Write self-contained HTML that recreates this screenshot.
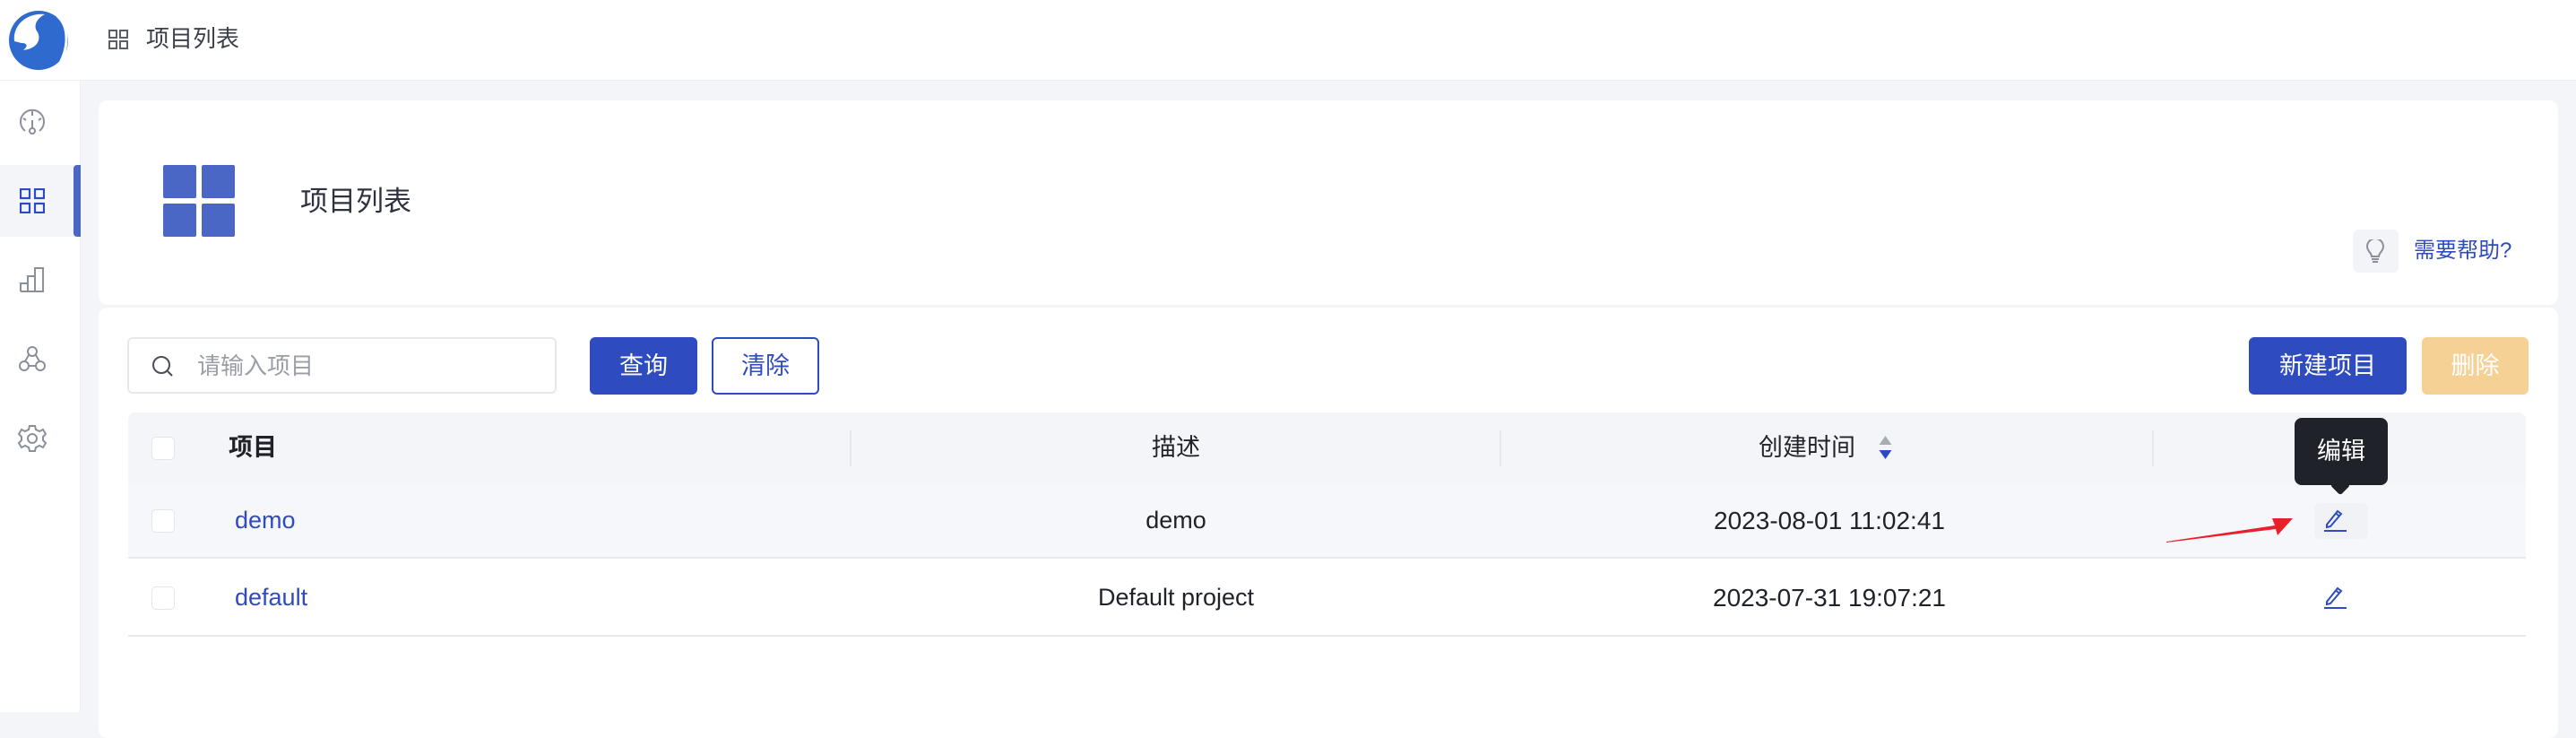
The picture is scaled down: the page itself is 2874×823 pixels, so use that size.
<!DOCTYPE html>
<html><head><meta charset="utf-8"><style>
*{margin:0;padding:0;box-sizing:border-box}
body{width:2874px;height:794px;background:#f4f5f8;font-family:"Liberation Sans","Noto Sans CJK SC",sans-serif;color:#1f2329;position:relative;overflow:hidden}
.a{position:absolute}
.t{position:absolute;white-space:nowrap;line-height:1}
</style></head><body>
<div class="a" style="left:0;top:0;width:90px;height:794px;background:#fff;border-right:1px solid #eceef2"></div>
<div class="a" style="left:0;top:0;width:2874px;height:90px;background:#fff;border-bottom:1px solid #eceef2"></div>
<svg class="a" style="left:6px;top:6px" width="74" height="74" viewBox="0 0 74 74">
<circle cx="37" cy="39" r="33" fill="#2f6bcf"/>
<path d="M10 40 C8 22 24 8 44 10 C36 14 30 22 36 30 C40 38 36 48 20 50 C26 45 24 42 18 42 Z" fill="#fff"/>
<path d="M58 12 C70 22 72 44 60 66" stroke="#fff" stroke-width="3" fill="none"/>
</svg>
<div class="a" style="left:0;top:184px;width:90px;height:80px;background:#f4f5f8"></div>
<div class="a" style="left:82px;top:184px;width:8px;height:80px;background:#4b67c6;border-radius:4px 0 0 4px"></div>
<svg class="a" style="left:20px;top:120px" width="32" height="32" viewBox="0 0 32 32" fill="none" stroke="#8a8f99" stroke-width="2"><path d="M8 26 A13 13 0 1 1 24 26"/><path d="M16 4v5M6 12l3 2M26 12l-3 2M16 14v10"/><circle cx="16" cy="26" r="3"/></svg>
<svg class="a" style="left:22px;top:210px" width="28" height="28" viewBox="0 0 28 28" fill="none" stroke="#2e4bbf" stroke-width="2.2"><rect x="1" y="1" width="10" height="10"/><rect x="17" y="1" width="10" height="10"/><rect x="1" y="17" width="10" height="10"/><rect x="17" y="17" width="10" height="10"/></svg>
<svg class="a" style="left:22px;top:298px" width="28" height="28" viewBox="0 0 28 28" fill="none" stroke="#8a8f99" stroke-width="2"><path d="M1 27V18h8v9M9 27V10h8v17M17 27V1h9v26H1"/></svg>
<svg class="a" style="left:20px;top:385px" width="32" height="30" viewBox="0 0 32 30" fill="none" stroke="#8a8f99" stroke-width="2"><circle cx="16" cy="7" r="5"/><circle cx="7" cy="23" r="5"/><circle cx="25" cy="23" r="5"/><path d="M12 11l-4 7M20 11l4 7M12 23h8"/></svg>
<svg class="a" style="left:20px;top:473px" width="32" height="32" viewBox="0 0 32 32" fill="none" stroke="#8a8f99" stroke-width="2"><path d="M13 2h6l1 4 4 2 4-2 3 5-3 3v4l3 3-3 5-4-2-4 2-1 4h-6l-1-4-4-2-4 2-3-5 3-3v-4L1 11l3-5 4 2 4-2z"/><circle cx="16" cy="16" r="5"/></svg>
<svg class="a" style="left:121px;top:33px" width="22" height="22" viewBox="0 0 22 22" fill="none" stroke="#5a5f69" stroke-width="2"><rect x="1" y="1" width="8" height="8"/><rect x="13" y="1" width="8" height="8"/><rect x="1" y="13" width="8" height="8"/><rect x="13" y="13" width="8" height="8"/></svg>
<div class="t" style="left:163px;top:30px;font-size:26px;color:#3a3f49">项目列表</div>
<div class="a" style="left:110px;top:112px;width:2744px;height:228px;background:#fff;border-radius:10px"></div>
<div class="a" style="left:182px;top:184px;width:37px;height:37px;background:#4b67c6;border-radius:2px"></div>
<div class="a" style="left:225px;top:184px;width:37px;height:37px;background:#4b67c6;border-radius:2px"></div>
<div class="a" style="left:182px;top:227px;width:37px;height:37px;background:#4b67c6;border-radius:2px"></div>
<div class="a" style="left:225px;top:227px;width:37px;height:37px;background:#4b67c6;border-radius:2px"></div>
<div class="t" style="left:335px;top:209px;font-size:31px;color:#2d3240">项目列表</div>
<div class="a" style="left:2625px;top:256px;width:51px;height:48px;background:#f3f4f7;border-radius:6px"></div>
<svg class="a" style="left:2640px;top:267px" width="20" height="26" viewBox="0 0 20 26" fill="none" stroke="#8a8f99" stroke-width="2"><path d="M6 19c0-4-5-6-5-11a9 9 0 0 1 18 0c0 5-5 7-5 11z"/><path d="M6 22h8M7 25h6"/></svg>
<div class="t" style="left:2693px;top:268px;font-size:24px;color:#2e4bbf">需要帮助?</div>
<div class="a" style="left:110px;top:343px;width:2744px;height:480px;background:#fff;border-radius:10px"></div>
<div class="a" style="left:142px;top:376px;width:479px;height:63px;border:2px solid #e6e8ec;border-radius:6px;background:#fff"></div>
<svg class="a" style="left:169px;top:396px" width="25" height="25" viewBox="0 0 25 25" fill="none" stroke="#4a4f59" stroke-width="2"><circle cx="11" cy="11" r="9"/><path d="M18 18l5 5"/></svg>
<div class="t" style="left:220px;top:395px;font-size:26px;color:#9a9ea6">请输入项目</div>
<div class="a" style="left:658px;top:376px;width:120px;height:64px;background:#2e4bbf;border-radius:6px;color:#fff;font-size:27px;text-align:center;line-height:64px">查询</div>
<div class="a" style="left:794px;top:376px;width:120px;height:64px;border:2px solid #2e4bbf;border-radius:6px;color:#2e4bbf;font-size:27px;text-align:center;line-height:60px">清除</div>
<div class="a" style="left:2509px;top:376px;width:176px;height:64px;background:#2e4bbf;border-radius:6px;color:#fff;font-size:27px;text-align:center;line-height:64px">新建项目</div>
<div class="a" style="left:2702px;top:376px;width:119px;height:64px;background:#f6d196;border-radius:6px;color:#fff;font-size:27px;text-align:center;line-height:64px">删除</div>
<div class="a" style="left:143px;top:460px;width:2675px;height:80px;background:#f4f5f8;border-radius:8px 8px 0 0"></div>
<div class="a" style="left:143px;top:540px;width:2675px;height:83px;background:#f6f7fa;border-bottom:2px solid #e8e9ec"></div>
<div class="a" style="left:143px;top:623px;width:2675px;height:87px;background:#fff;border-bottom:2px solid #e8e9ec"></div>
<div class="a" style="left:948px;top:480px;width:2px;height:40px;background:#e6e8ec"></div>
<div class="a" style="left:1673px;top:480px;width:2px;height:40px;background:#e6e8ec"></div>
<div class="a" style="left:2401px;top:480px;width:2px;height:40px;background:#e6e8ec"></div>
<div class="a" style="left:169px;top:487px;width:26px;height:26px;border:1.5px solid #e3e5e9;border-radius:5px;background:#fff"></div>
<div class="a" style="left:169px;top:568px;width:26px;height:26px;border:1.5px solid #e3e5e9;border-radius:5px;background:#fff"></div>
<div class="a" style="left:169px;top:654px;width:26px;height:26px;border:1.5px solid #e3e5e9;border-radius:5px;background:#fff"></div>
<div class="t" style="left:255px;top:486px;font-size:27px;font-weight:bold;color:#1f2329">项目</div>
<div class="t" style="left:1285px;top:486px;font-size:27px;color:#1f2329">描述</div>
<div class="t" style="left:1962px;top:486px;font-size:27px;color:#1f2329">创建时间</div>
<svg class="a" style="left:2096px;top:486px" width="15" height="27" viewBox="0 0 15 27"><path d="M7.5 0L14.5 10H0.5z" fill="#a8acb3"/><path d="M0.5 16H14.5L7.5 26z" fill="#2e4bbf"/></svg>
<div class="t" style="left:262px;top:567px;font-size:27px;color:#2e4bbf">demo</div>
<div class="t" style="left:1312px;top:567px;font-size:27px;transform:translateX(-50%)">demo</div>
<div class="t" style="left:2041px;top:567px;font-size:28px;transform:translateX(-50%)">2023-08-01 11:02:41</div>
<div class="t" style="left:262px;top:653px;font-size:27px;color:#2e4bbf">default</div>
<div class="t" style="left:1312px;top:653px;font-size:27px;transform:translateX(-50%)">Default project</div>
<div class="t" style="left:2041px;top:653px;font-size:28px;transform:translateX(-50%)">2023-07-31 19:07:21</div>
<div class="a" style="left:2582px;top:561px;width:60px;height:40px;background:#f1f2f6;border-radius:6px"></div>
<svg class="a" style="left:2592px;top:566px" width="28" height="28" viewBox="0 0 28 28" fill="none" stroke="#2e4bbf" stroke-width="2"><path d="M4 19L16 4l4 3L8 21l-4 1z M14 6.5l4 3"/><path d="M1 26h25"/></svg>
<svg class="a" style="left:2592px;top:652px" width="28" height="28" viewBox="0 0 28 28" fill="none" stroke="#2e4bbf" stroke-width="2"><path d="M4 19L16 4l4 3L8 21l-4 1z M14 6.5l4 3"/><path d="M1 26h25"/></svg>
<div class="a" style="left:2560px;top:466px;width:104px;height:75px;background:#1f2229;border-radius:8px;color:#fff;font-size:27px;text-align:center;line-height:75px">编辑</div>
<div class="a" style="left:2603px;top:533px;width:16px;height:16px;background:#1f2229;transform:rotate(45deg);border-radius:3px"></div>
<svg class="a" style="left:2410px;top:570px" width="155" height="40" viewBox="0 0 155 40"><path d="M7 34 L128 16 L125 8 L148 8 L131 27 L129 20 L7 35z" fill="#e8202a"/></svg>
</body></html>
